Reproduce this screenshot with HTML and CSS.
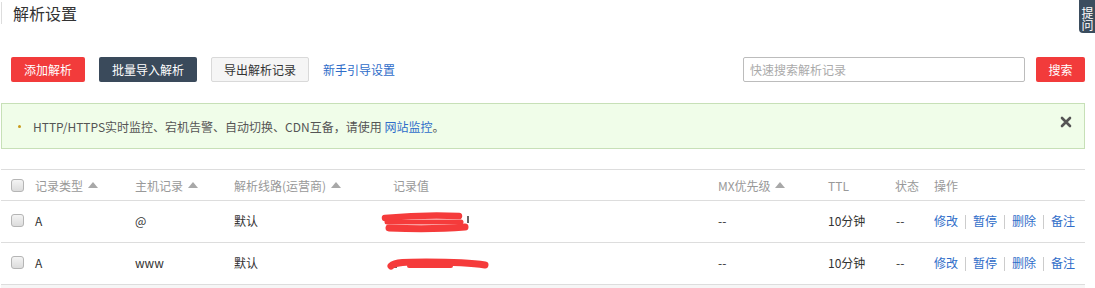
FILE: index.html
```html
<!DOCTYPE html>
<html lang="zh-CN">
<head>
<meta charset="utf-8">
<title>解析设置</title>
<link rel="stylesheet" href="styles.css">
</head>
<body>
<div class="ask-tab"><span class="ask-text">提问</span></div>
<div class="page">
  <h1 class="title">解析设置</h1>

  <div class="toolbar">
    <div class="tools-left">
      <button class="btn btn-red btn-add">添加解析</button>
      <button class="btn btn-dark">批量导入解析</button>
      <button class="btn btn-light">导出解析记录</button>
      <a class="guide-link">新手引导设置</a>
    </div>
    <div class="tools-right">
      <div class="search-input">快速搜索解析记录</div>
      <button class="btn btn-red btn-search">搜索</button>
    </div>
  </div>

  <div class="alert">
    <span class="dot"></span>
    <span class="alert-text">HTTP/HTTPS实时监控、宕机告警、自动切换、CDN互备，请使用 <a class="link">网站监控</a>。</span>
    <span class="close">
      <svg width="12" height="12" viewBox="0 0 12 12"><path d="M2 2 L10 10 M10 2 L2 10" stroke="#555" stroke-width="2.6" stroke-linecap="round"/></svg>
    </span>
  </div>

  <table class="records">
    <colgroup>
      <col class="c-check"><col class="c-type"><col class="c-host"><col class="c-line"><col class="c-value"><col class="c-mx"><col class="c-ttl"><col class="c-state"><col class="c-op">
    </colgroup>
    <thead>
      <tr>
        <th class="cell-check"><span class="checkbox"></span></th>
        <th>记录类型 <span class="sort"></span></th>
        <th>主机记录 <span class="sort"></span></th>
        <th>解析线路(运营商) <span class="sort"></span></th>
        <th>记录值</th>
        <th>MX优先级 <span class="sort"></span></th>
        <th>TTL</th>
        <th>状态</th>
        <th>操作</th>
      </tr>
    </thead>
    <tbody>
      <tr>
        <td class="cell-check"><span class="checkbox"></span></td>
        <td>A</td>
        <td>@</td>
        <td>默认</td>
        <td class="value-cell">
          <svg class="scribble" width="100" height="40" viewBox="0 0 100 40"><path d="M87 15 L87 22" stroke="#333" stroke-width="1.5"/><path d="M4 17 C25 15, 55 14, 78 15" stroke="#f53b3b" stroke-width="6.5" stroke-linecap="round" fill="none"/><path d="M6 21 L80 21" stroke="#f53b3b" stroke-width="5" stroke-linecap="round" fill="none"/><path d="M8 27 C35 28, 60 28, 84 26" stroke="#f53b3b" stroke-width="7" stroke-linecap="round" fill="none"/></svg>
        </td>
        <td>--</td>
        <td>10分钟</td>
        <td class="state">--</td>
        <td class="ops"><a>修改</a><i></i><a>暂停</a><i></i><a>删除</a><i></i><a>备注</a></td>
      </tr>
      <tr>
        <td class="cell-check"><span class="checkbox"></span></td>
        <td>A</td>
        <td>www</td>
        <td>默认</td>
        <td class="value-cell">
          <svg class="scribble" width="120" height="40" viewBox="0 0 120 40"><path d="M13 24 L16 24" stroke="#333" stroke-width="1.5"/><path d="M10 23 C14 19, 25 19, 45 19 C70 19, 92 20, 104 22" stroke="#f53b3b" stroke-width="7" stroke-linecap="round" fill="none"/><path d="M28 23 L70 23" stroke="#f53b3b" stroke-width="4" stroke-linecap="round" fill="none"/></svg>
        </td>
        <td>--</td>
        <td>10分钟</td>
        <td class="state">--</td>
        <td class="ops"><a>修改</a><i></i><a>暂停</a><i></i><a>删除</a><i></i><a>备注</a></td>
      </tr>
    </tbody>
  </table>
  <div class="table-foot"></div>
</div>
</body>
</html>
```

FILE: styles.css
```css
html, body {
  margin: 0;
  padding: 0;
  background: #fff;
}
body {
  font-family: "Noto Sans CJK SC", "Liberation Sans", sans-serif;
  font-size: 12px;
  color: #333;
  position: relative;
  width: 1095px;
  height: 288px;
  overflow: hidden;
}

.ask-tab {
  position: absolute;
  top: 0;
  right: 0;
  width: 16px;
  height: 33px;
  background: #3b4d5e;
  border-bottom-left-radius: 4px;
  overflow: hidden;
}
.ask-text {
  position: absolute;
  left: 2px;
  top: 7px;
  color: #fff;
  font-size: 12px;
  line-height: 12px;
  writing-mode: vertical-rl;
}

.page {
  padding: 0 0 0 1px;
}

.title {
  margin: 2px 0 0 0;
  height: 22px;
  line-height: 22px;
  border-left: 1px solid #ddd;
  padding-left: 11px;
  font-size: 16px;
  font-weight: normal;
  color: #333;
}

.toolbar {
  display: flex;
  justify-content: space-between;
  align-items: center;
  margin-top: 33px;
  padding: 0 10px 0 10px;
}
.tools-left, .tools-right {
  display: flex;
  align-items: center;
}
.btn {
  height: 25px;
  border: 1px solid transparent;
  border-radius: 2px;
  font-family: "Noto Sans CJK SC", sans-serif;
  font-size: 12px;
  line-height: 23px;
  padding: 0;
  box-sizing: border-box;
  cursor: pointer;
}
.btn-red {
  background: #f23b3b;
  color: #fff;
}
.btn-add {
  width: 74px;
}
.btn-dark {
  width: 98px;
  margin-left: 14px;
  background: #3a4a5b;
  color: #fff;
}
.btn-light {
  width: 98px;
  margin-left: 14px;
  background: #f5f5f5;
  border-color: #d9d9d9;
  color: #333;
}
.guide-link {
  margin-left: 14px;
  font-size: 12px;
  color: #2f6dc9;
}
.search-input {
  width: 282px;
  height: 25px;
  box-sizing: border-box;
  border: 1px solid #bcbcbc;
  border-radius: 2px;
  padding-left: 6px;
  font-size: 12px;
  line-height: 23px;
  color: #aaa;
}
.btn-search {
  width: 49px;
  margin-left: 11px;
}

.alert {
  display: flex;
  align-items: center;
  margin: 21px 10px 0 0;
  height: 46px;
  box-sizing: border-box;
  background: #f0fde9;
  border: 1px solid #c7e0b7;
  position: relative;
}
.dot {
  width: 3px;
  height: 3px;
  background: #c99a1a;
  border-radius: 50%;
  margin-left: 16px;
}
.alert-text {
  margin-left: 12px;
  color: #555;
  font-size: 12px;
}
.link {
  color: #2f6dc9;
}
.close {
  position: absolute;
  right: 12px;
  top: 10px;
  width: 12px;
  height: 12px;
}

.records {
  margin-top: 20px;
  width: 1084px;
  border-collapse: collapse;
  table-layout: fixed;
}
.c-check { width: 34px; }
.c-type { width: 100px; }
.c-host { width: 99px; }
.c-line { width: 159px; }
.c-value { width: 325px; }
.c-mx { width: 110px; }
.c-ttl { width: 67px; }
.c-state { width: 39px; }
.c-op { width: 151px; }

.records th, .records td {
  padding: 0;
  text-align: left;
  white-space: nowrap;
  border-top: 1px solid #ddd;
  font-size: 12px;
}
.records th {
  height: 30px;
  font-weight: normal;
  color: #999;
}
.records td {
  height: 39px;
  color: #333;
  padding-bottom: 2px;
}
.records tbody tr:last-child td {
  border-bottom: 1px solid #ddd;
}
.cell-check {
  padding-left: 10px !important;
}
.checkbox {
  display: inline-block;
  width: 11px;
  height: 11px;
  border: 1px solid #b5b5b5;
  border-radius: 3px;
  background: linear-gradient(#f4f4f4, #dcdcdc);
  vertical-align: middle;
  position: relative;
  top: -2px;
}
.sort {
  display: inline-block;
  width: 0;
  height: 0;
  border-left: 5px solid transparent;
  border-right: 5px solid transparent;
  border-bottom: 6px solid #a8a8a8;
  vertical-align: middle;
  margin-left: 2px;
  position: relative;
  top: -2px;
}
.state {
  padding-left: 1px !important;
}
.ops a {
  color: #2f6dc9;
}
.ops i {
  display: inline-block;
  width: 1px;
  height: 14px;
  background: #ccc;
  margin: 0 7px;
  vertical-align: middle;
}
.value-cell {
  position: relative;
}
.scribble {
  position: absolute;
  left: -12px;
  top: 0;
}
.table-foot {
  height: 6px;
  width: 1084px;
  background: #f6f6f6;
}
```
